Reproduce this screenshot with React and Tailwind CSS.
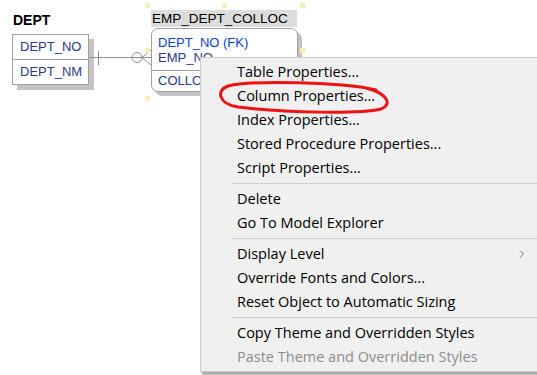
import { ChevronRight } from "lucide-react";

const menuGroups = [
    ["Table Properties...", "Column Properties...", "Index Properties...", "Stored Procedure Properties...", "Script Properties..."],
    ["Delete", "Go To Model Explorer"],
    ["Display Level", "Override Fonts and Colors...", "Reset Object to Automatic Sizing"],
    ["Copy Theme and Overridden Styles", "Paste Theme and Overridden Styles"],
];

const handles = [
    [145, 3], [222, 3], [300, 3],
    [145, 48], [300, 48],
    [145, 96],
];

const MenuItem = ({ label }) => {
    const disabled = label.startsWith("Paste");
    return (
        <div className={`flex items-center h-6 pl-9 pr-3 ${disabled ? "text-[#8d8d8d]" : "text-black"}`}>
            <span className="flex-1 whitespace-nowrap">{label}</span>
            {label === "Display Level" && (
                <ChevronRight size={12} strokeWidth={1.5} className="mr-[4px] text-[#444]" />
            )}
        </div>
    );
};

const App = () => {
    return (
        <div className="relative w-[537px] h-[375px] bg-white overflow-hidden font-['Liberation_Sans',Arial,sans-serif]">
            {/* DEPT table */}
            <div className="absolute left-[13px] top-[12px] text-[14px] font-bold leading-4 text-black">DEPT</div>
            <div className="absolute left-[12px] top-[34px] w-[77px] h-[51px] bg-white border border-[#a0a0a0] shadow-[5px_5px_0_#c4c4c4] text-[13px] text-[#2a3a8a] flex flex-col">
                <div className="flex-1 flex items-center pl-[7px] border-b border-[#a0a0a0]">DEPT_NO</div>
                <div className="flex-1 flex items-center pl-[7px]">DEPT_NM</div>
            </div>

            {/* EMP_DEPT_COLLOC table */}
            <div className="absolute left-[151px] top-[10px] w-[146px] h-[17px] bg-[#dcdcdc] pl-[1px] text-[13.5px] leading-[17px] text-black">
                EMP_DEPT_COLLOC
            </div>
            <div className="absolute left-[151px] top-[28px] w-[147px] h-[64px] bg-white border border-[#a0a0a0] rounded-[7px] shadow-[4px_4px_0_#c4c4c4] text-[13px] flex flex-col">
                <div className="h-[42px] flex flex-col justify-center pl-[6px] border-b border-[#a0a0a0] leading-[15px]">
                    <span className="text-[#0a44c8]">DEPT_NO (FK)</span>
                    <span className="text-[#2a3a8a]">EMP_NO</span>
                </div>
                <div className="flex-1 flex items-center pl-[6px] text-[#2a3a8a]">COLLOC</div>
            </div>

            {/* relationship line */}
            <svg className="absolute left-0 top-0" width="537" height="120">
                <g stroke="#8e8e8e" strokeWidth="1" fill="none">
                    <line x1="89" y1="57.5" x2="151" y2="57.5" />
                    <line x1="98.5" y1="51" x2="98.5" y2="65" />
                    <circle cx="137" cy="57.5" r="5" />
                    <line x1="142" y1="57.5" x2="151" y2="50" />
                    <line x1="142" y1="57.5" x2="151" y2="65" />
                </g>
            </svg>

            {handles.map(([x, y]) => (
                <div
                    key={`${x}-${y}`}
                    className="absolute w-[5px] h-[5px] bg-[#f6efb8]"
                    style={{ left: x, top: y }}
                />
            ))}

            {/* context menu */}
            <div className="absolute left-[200px] top-[57px] w-[345px] pt-[2px] pb-[2px] bg-[#f0f0f0] border border-[#cccccc] shadow-[2px_3px_2px_rgba(0,0,0,0.35)] font-['Open_Sans','Noto_Sans',sans-serif] text-[14.5px]">
                {menuGroups.map((group, i) => (
                    <div key={i}>
                        {i > 0 && (
                            <div className="h-[7px] flex items-center pl-[31px]">
                                <div className="w-full h-px bg-[#d2d2d2]" />
                            </div>
                        )}
                        {group.map((label) => (
                            <MenuItem key={label} label={label} />
                        ))}
                    </div>
                ))}
            </div>

            {/* red highlight around Column Properties */}
            <svg className="absolute left-0 top-0 pointer-events-none" width="537" height="375">
                <path
                    d="M 376 90 C 344 82, 252 80, 228 86 C 216 90, 218 104, 238 107 C 286 113, 360 114, 381 109 C 392 105, 389 94, 366 88"
                    stroke="#ee1111"
                    strokeWidth="3"
                    fill="none"
                    strokeLinecap="round"
                />
            </svg>
        </div>
    );
};

export default App;
